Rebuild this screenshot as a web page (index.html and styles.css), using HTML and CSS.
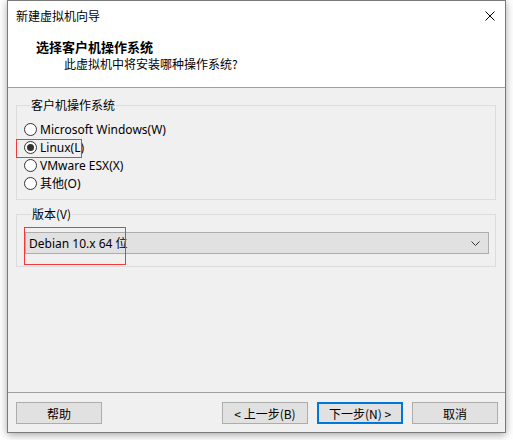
FILE: index.html
```html
<!DOCTYPE html>
<html lang="zh-CN">
<head>
<meta charset="utf-8">
<title>新建虚拟机向导</title>
<link rel="stylesheet" href="styles.css">
</head>
<body>
<div class="window">
  <div class="titlebar">
    <span class="title">新建虚拟机向导</span>
    <svg class="close" width="10" height="10" viewBox="0 0 10 10"><path d="M0.5 0.5 L9.5 9.5 M9.5 0.5 L0.5 9.5" stroke="#000" stroke-width="1" fill="none"/></svg>
  </div>
  <div class="header">
    <div class="heading">选择客户机操作系统</div>
    <div class="subheading">此虚拟机中将安装哪种操作系统?</div>
  </div>
  <div class="content">
    <fieldset class="group group-os">
      <legend>客户机操作系统</legend>
      <div class="radio"><span class="dot"></span><span>Microsoft Windows(W)</span></div>
      <div class="radio checked"><span class="dot"></span><span>Linux(L)</span></div>
      <div class="radio"><span class="dot"></span><span>VMware ESX(X)</span></div>
      <div class="radio"><span class="dot"></span><span>其他(O)</span></div>
    </fieldset>
    <fieldset class="group group-ver">
      <legend>版本(V)</legend>
      <div class="combo">
        <span>Debian 10.x 64 位</span>
        <svg class="chev" width="9" height="5" viewBox="0 0 9 5"><path d="M0.5 0.5 L4.5 4.5 L8.5 0.5" stroke="#333" stroke-width="1" fill="none"/></svg>
      </div>
    </fieldset>
  </div>
  <div class="footer">
    <button class="btn">帮助</button>
    <div class="spacer"></div>
    <button class="btn">&lt; 上一步(B)</button>
    <button class="btn default">下一步(N) &gt;</button>
    <button class="btn">取消</button>
  </div>
  <div class="mark mark-linux"></div>
  <div class="mark mark-ver"></div>
</div>
</body>
</html>
```
FILE: styles.css
```css
html, body {
  margin: 0;
  padding: 0;
  background: #ffffff;
}
body {
  width: 513px;
  height: 440px;
  overflow: hidden;
  font-family: "Noto Sans", "Noto Sans CJK SC", sans-serif;
  font-size: 12px;
  color: #000;
}
.window {
  position: relative;
  margin-left: 7px;
  width: 499px;
  height: 433px;
  box-sizing: border-box;
  border: 1px solid #7a7a7a;
  background: #f0f0f0;
  box-shadow: 0 2px 8px rgba(0,0,0,0.35);
  display: flex;
  flex-direction: column;
}
.titlebar {
  height: 30px;
  background: #fff;
  display: flex;
  align-items: center;
  padding: 0 10px 0 8px;
  flex: none;
}
.title {
  flex: 1;
  line-height: 16px;
  font-family: "Noto Sans CJK SC", sans-serif;
}
.close { display: block; }
.header {
  background: #fff;
  border-bottom: 1px solid #a0a0a0;
  flex: none;
  padding-top: 7px;
  height: 49px;
  font-family: "Noto Sans CJK SC", sans-serif;
}
.heading {
  font-weight: bold;
  font-size: 13px;
  line-height: 17px;
  padding-left: 28px;
}
.subheading {
  line-height: 18px;
  padding-left: 56px;
}
.content {
  flex: 1;
  padding: 0 9px 0 8px;
}
.group {
  margin: 0;
  border: 1px solid #dcdcdc;
  padding: 0;
  min-width: 0;
}
.group legend {
  margin-left: 6px;
  padding: 0 1px;
  line-height: 16px;
  font-family: "Noto Sans CJK SC", sans-serif;
}
.group-os {
  margin-top: 9px;
  padding: 7px 0 7px 7px;
}
.radio {
  height: 18px;
  display: flex;
  align-items: center;
  gap: 3px;
}
.radio .dot {
  width: 11px;
  height: 11px;
  border: 1px solid #333;
  border-radius: 50%;
  background: #fff;
  position: relative;
  flex: none;
}
.radio.checked .dot::after {
  content: "";
  position: absolute;
  left: 2px;
  top: 2px;
  width: 7px;
  height: 7px;
  border-radius: 50%;
  background: #333;
}
.group-ver {
  margin-top: 6px;
  padding: 10px 6px 12px 8px;
}
.combo {
  height: 22px;
  box-sizing: border-box;
  border: 1px solid #adadad;
  background: #e1e1e1;
  display: flex;
  align-items: center;
  justify-content: space-between;
  padding: 0 8px 0 3px;
}
.footer {
  flex: none;
  border-top: 1px solid #a0a0a0;
  padding: 9px 7px 8px 8px;
  display: flex;
  gap: 9px;
}
.spacer { flex: 1; }
.btn {
  width: 86px;
  height: 22px;
  box-sizing: border-box;
  border: 1px solid #adadad;
  background: #e1e1e1;
  font-family: "Noto Sans CJK SC", sans-serif;
  font-size: 12px;
  color: #000;
  padding: 0;
  margin: 0;
}
.btn.default {
  border: 2px solid #0078d7;
}
.mark {
  position: absolute;
  z-index: 10;
  box-sizing: border-box;
  border: 1px solid #f03a3a;
  background: transparent;
  pointer-events: none;
}
.mark-linux {
  left: 8px;
  top: 138px;
  width: 66px;
  height: 19px;
}
.mark-ver {
  left: 16px;
  top: 226px;
  width: 102px;
  height: 38px;
}
```
